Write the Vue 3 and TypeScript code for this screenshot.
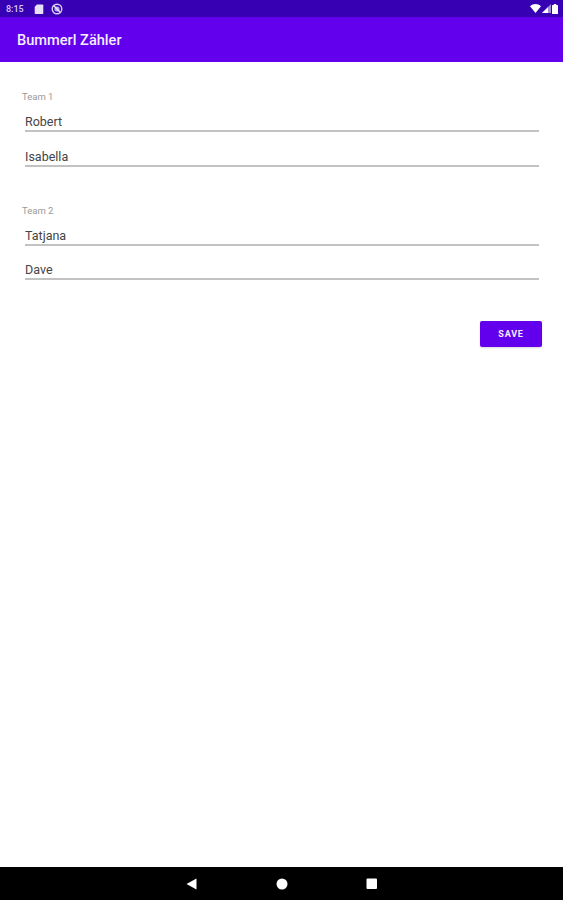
<template>
  <div class="screen">
    <div class="status-bar">
      <span class="clock">8:15</span>
      <svg class="sb-icon sd" width="10" height="10" viewBox="0 0 10 10">
        <path d="M3 0.5h5.5a0.8 0.8 0 0 1 .8.8v7.9a0.8 0.8 0 0 1-.8.8H1.5a0.8 0.8 0 0 1-.8-.8V2.8z" fill="#e8e0f8" />
      </svg>
      <svg class="sb-icon dnd" width="12" height="12" viewBox="0 0 12 12">
        <circle cx="6" cy="6" r="4.8" fill="none" stroke="#d8ccf4" stroke-width="1.4" />
        <circle cx="6" cy="6" r="2.6" fill="#b8a4ea" />
        <path d="M2.8 2.8l6.4 6.4" stroke="#e8e0f8" stroke-width="1.5" />
      </svg>
      <span class="spacer"></span>
      <svg width="11" height="9" viewBox="0 0 11 9">
        <path d="M0 2.2C3.2-.6 7.8-.6 11 2.2L5.5 9z" fill="#fff" />
      </svg>
      <svg width="9" height="9" viewBox="0 0 9 9">
        <path d="M9 0v9H0z" fill="#fff" opacity="0.55" />
        <path d="M6 3.2V9H0z" fill="#fff" />
      </svg>
      <svg width="6" height="10" viewBox="0 0 6 10">
        <path d="M1.8 0h2.4v1H5.4a.6.6 0 0 1 .6.6v7.8a.6.6 0 0 1-.6.6H.6a.6.6 0 0 1-.6-.6V1.6A.6.6 0 0 1 .6 1h1.2z" fill="#fff" />
      </svg>
    </div>

    <header class="app-bar">Bummerl Zähler</header>

    <main class="content">
      <section v-for="team in teams" :key="team.label" class="team">
        <div class="team-label">{{ team.label }}</div>
        <div v-for="player in team.players" :key="player" class="field">{{ player }}</div>
      </section>
      <div class="actions">
        <button type="button" class="save">SAVE</button>
      </div>
    </main>

    <nav class="nav-bar">
      <svg width="12" height="12" viewBox="0 0 12 12"><path d="M10.5 .5v11L.5 6z" fill="#fff" /></svg>
      <svg width="12" height="12" viewBox="0 0 12 12"><circle cx="6" cy="6" r="5.5" fill="#fff" /></svg>
      <svg width="12" height="12" viewBox="0 0 12 12"><rect x=".5" y=".5" width="10.5" height="10.5" rx="1" fill="#fff" /></svg>
    </nav>
  </div>
</template>

<script setup lang="ts">
const teams = [
  { label: "Team 1", players: ["Robert", "Isabella"] },
  { label: "Team 2", players: ["Tatjana", "Dave"] },
];
</script>

<style scoped>
.screen {
  display: flex;
  flex-direction: column;
  width: 563px;
  height: 900px;
  background: #fff;
  font-family: Roboto, "Liberation Sans", sans-serif;
  overflow: hidden;
}

.status-bar {
  display: flex;
  align-items: center;
  gap: 1px;
  height: 17px;
  padding: 0 5px 0 6px;
  background: #3700b3;
}

.clock {
  width: 26px;
  color: #d8ccf4;
  font-size: 9px;
  font-weight: 500;
}

.sb-icon {
  margin-right: 6px;
}

.sd {
  margin-left: 1px;
}

.spacer {
  flex: 1;
}

.app-bar {
  display: flex;
  align-items: center;
  height: 44px;
  padding: 1px 0 0 17px;
  background: #6200ee;
  color: #f4eefe;
  font-size: 14.6px;
  font-weight: 500;
}

.content {
  flex: 1;
  padding: 28px 21px 0 22px;
}

.team {
  margin-bottom: 37px;
}

.team-label {
  height: 14px;
  color: #989898;
  font-size: 9.5px;
  line-height: 14px;
}

.field {
  display: flex;
  align-items: flex-end;
  height: 34px;
  margin: 0 3px;
  box-sizing: border-box;
  border-bottom: 2px solid #c2c2c2;
  color: #444;
  font-size: 12.5px;
  line-height: 17px;
}

.team-label + .field {
  height: 28px;
}

.team:first-child .field:last-child {
  height: 35px;
}

.actions {
  display: flex;
  justify-content: flex-end;
  margin-top: 41px;
}

.save {
  width: 62px;
  height: 26px;
  padding: 0;
  border: none;
  border-radius: 2px;
  background: #6200ee;
  color: #f4eefe;
  font-family: inherit;
  font-size: 9px;
  font-weight: 700;
  letter-spacing: 0.8px;
  box-shadow: 0 1px 2px rgba(0, 0, 0, 0.15);
}

.nav-bar {
  display: flex;
  align-items: center;
  justify-content: center;
  gap: 78px;
  height: 33px;
  background: #000;
}
</style>

<style>
html,
body {
  margin: 0;
  background: #fff;
}
</style>
